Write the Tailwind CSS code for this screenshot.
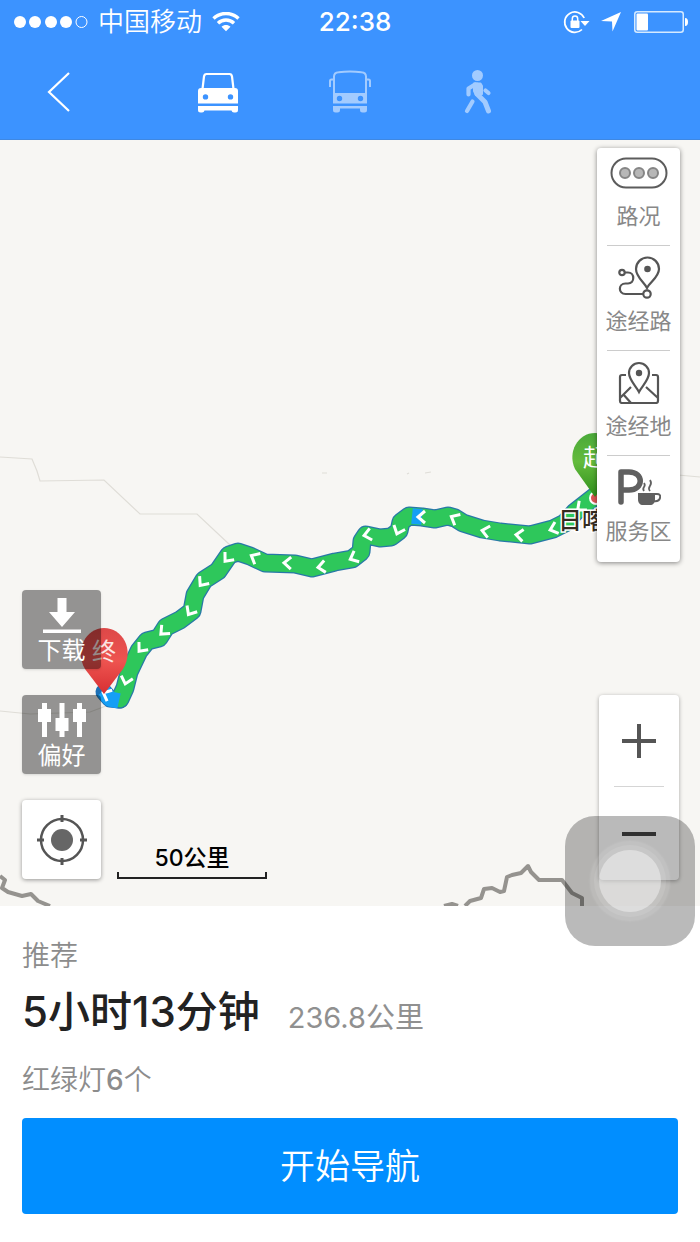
<!DOCTYPE html>
<html lang="zh-CN">
<head>
<meta charset="utf-8">
<meta name="viewport" content="width=device-width, initial-scale=1">
<title>路线规划</title>
<script src="https://cdn.jsdelivr.net/npm/@tailwindcss/browser@4"></script>
</head>
<body class="relative flex min-h-screen flex-col bg-white font-['Inter','Noto_Sans_CJK_SC',sans-serif]">

<header class="border-b border-[#3f88e2] bg-[#3c93ff] text-white">
  <!-- Status bar -->
  <div class="grid h-11 grid-cols-[1fr_auto_1fr] items-center pr-3 pl-[14px]">
    <div class="flex items-center">
      <svg class="h-4 w-[76px]" viewBox="0 0 76 16" fill="#fff" aria-label="信号"><circle cx="6" cy="8" r="6"/><circle cx="21" cy="8" r="6"/><circle cx="37" cy="8" r="6"/><circle cx="52" cy="8" r="6"/><circle cx="67.500" cy="8" r="5.500" fill="none" stroke="#fff"/></svg>
      <span class="ml-2 text-[26px] leading-9 font-[350]">中国移动</span>
      <svg class="ml-[10px] h-5 w-7" viewBox="0 0 28 20" fill="none" stroke="#fff" stroke-width="3.400" aria-label="Wi-Fi"><path d="M1.500 6.500C8.500-.2 19.500-.2 26.500 6.500"/><path d="M6 11.200c4.500-4.300 11.500-4.300 16 0"/><path d="M9.500 14.800c2.600-2.300 6.400-2.300 9 0L14 19.300z" fill="#fff" stroke="none"/></svg>
    </div>
    <time class="pl-2 text-[26px] leading-9 font-medium">22:38</time>
    <div class="flex items-center justify-end">
      <svg class="h-6 w-7" viewBox="0 0 28 24" aria-label="方向锁定"><path d="M21.200 8A10.200 10.200 0 1 0 19 19.500" fill="none" stroke="#fff" stroke-width="1.700"/><path d="M17.500 11h9l-4.500 5z" fill="#fff"/><rect x="7.500" y="10.500" width="9" height="7.500" rx="1" fill="#fff"/><path d="M9.300 11V8.800a2.700 2.700 0 0 1 5.400 0V11" fill="none" stroke="#fff" stroke-width="1.500"/></svg>
      <svg class="mr-px ml-[10px] h-5 w-5" viewBox="0 0 20 20" aria-label="定位"><path d="M20 0 11.500 19.500 11 9.500 0 9z" fill="#fff"/></svg>
      <svg class="ml-3 h-[22px] w-[54px]" viewBox="0 0 54 22" aria-label="电池"><rect x=".75" y=".75" width="48.500" height="20.500" rx="2.500" fill="none" stroke="#d5eaff" stroke-width="1.500"/><rect x="2.500" y="2.500" width="11.500" height="17" rx="1" fill="#fff"/><path d="M51 7c2.500 0 3 2 3 4s-.5 4-3 4z" fill="#fff"/></svg>
    </div>
  </div>
  <!-- Travel modes -->
  <nav class="flex h-[95px] items-center pl-[34px]" aria-label="出行方式">
    <button type="button" aria-label="返回" class="grid h-14 w-[50px] place-items-center">
      <svg class="h-10 w-6" viewBox="0 0 24 40" fill="none" stroke="#fff" stroke-width="2.200"><path d="M22 1 2 20 22 39"/></svg>
    </button>
    <div class="ml-[106px] flex items-center gap-[76px]">
      <button type="button" aria-label="驾车" class="grid h-14 w-14 place-items-center">
        <svg class="h-12 w-12" viewBox="0 0 48 48" fill="#fff"><path d="M8.500 21 10 8.500C10.300 6.500 11 6 12.500 6h23c1.500 0 2.200.5 2.500 2.500L39.500 21" fill="none" stroke="#fff" stroke-width="2.200"/><path fill-rule="evenodd" d="M7 20h34c2 0 3 1 3 3v12.500H4V23c0-2 1-3 3-3zm4.500 6.200a2.700 2.700 0 1 0 0 5.400 2.700 2.700 0 0 0 0-5.400zm25 0a2.700 2.700 0 1 0 0 5.400 2.700 2.700 0 0 0 0-5.400z"/><path d="M4 38h40v4a2.500 2.500 0 0 1-2.500 2.500h-1.500A2.500 2.500 0 0 1 37.500 42.500H10.500A2.500 2.500 0 0 1 8 44.500H6.500A2.500 2.500 0 0 1 4 42z"/></svg>
      </button>
      <button type="button" aria-label="公交" class="grid h-14 w-14 place-items-center">
        <svg class="h-12 w-12" viewBox="0 0 48 48" fill="#a2cbff"><path d="M8 27V8.500C8 6 9.500 4.500 12.500 4.200c7-1 16-1 23 0 3 .3 4.500 1.800 4.500 4.300V27M8 11.500H5.500c-1 0-1.500.5-1.500 1.500V19M40 11.500h2.500c1 0 1.500.5 1.500 1.500V19" fill="none" stroke="#a2cbff" stroke-width="2"/><path fill-rule="evenodd" d="M7 25h34v10.500H7zm6.500 2.800a2.700 2.700 0 1 0 0 5.400 2.700 2.700 0 0 0 0-5.400zm21 0a2.700 2.700 0 1 0 0 5.400 2.700 2.700 0 0 0 0-5.400z"/><path d="M7 38h34v4a2.500 2.500 0 0 1-2.500 2.500h-2A2.500 2.500 0 0 1 34 42v-1.500H14V42a2.500 2.500 0 0 1-2.500 2.500h-2A2.500 2.500 0 0 1 7 42z"/></svg>
      </button>
      <button type="button" aria-label="步行" class="-ml-1 grid h-14 w-14 place-items-center">
        <svg class="h-12 w-12" viewBox="0 0 48 48" fill="none" stroke="#a2cbff" stroke-width="4.200" stroke-linecap="round" stroke-linejoin="round"><circle cx="23.500" cy="7.500" r="5.500" fill="#a2cbff" stroke="none"/><path d="M21 16.500 14.500 20.500v6M31.500 22.500l3 2.500M18.500 33.500l-5.500 9.500"/><path d="M23 17v9l8 8 3.500 9" stroke-width="5"/><path d="M20 15.500h6.500L28 18v8l-6 1-2-4z" fill="#a2cbff" stroke-width="2"/></svg>
      </button>
    </div>
  </nav>
</header>

<main class="flex flex-1 flex-col">
  <section class="relative flex min-h-[766px] flex-1 justify-between overflow-hidden bg-[#f7f6f3]" aria-label="地图">
    <!-- Map canvas -->
    <svg class="absolute inset-0 h-full w-full" viewBox="0 140 700 766" preserveAspectRatio="xMidYMid slice" fill="none" aria-hidden="true">
      <defs>
        <linearGradient id="red" x1="0" y1="0" x2="0" y2="1"><stop offset="0" stop-color="#dd4848"/><stop offset=".5" stop-color="#ee5450"/><stop offset="1" stop-color="#d72f32"/></linearGradient>
        <linearGradient id="green" x1="0" y1="0" x2="0" y2="1"><stop offset="0" stop-color="#4aa93a"/><stop offset=".45" stop-color="#64bb3c"/><stop offset="1" stop-color="#2f8f1c"/></linearGradient>
        <path id="route" d="M598 494 575 512 565 523 553 529 530 535 500 532 482 529 463 523 455 518 448 516 435 519 422 517 409 516 401 522 399 531 391 537 380 538 366 535 362 541 361 552 352 559 335 562 312 568 295 564 265 563 250 556 238 552 229 555 218 571 204 580 195 595 192 611 180 620 166 627 159 638 147 641 139 651 129 672 125 688 120 699"/>
        <path id="arrow" d="M4-6-3 0 4 6"/>
      </defs>
      <g stroke="#dfddd7" stroke-width="1.200"><path d="M0 457 32 459 37 471 40 481 104 480 140 514 197 514 230 545"/><path d="M678 475 700 477M0 711 30 714 90 712 106 706M322 473h5M407 474l2-1M425 473l6-1"/></g>
      <g stroke="#95938f" stroke-width="4" stroke-linejoin="round"><path d="M0 876 5 880 2 888 8 892 22 896 31 894 38 901 50 906M444 906l8-2 6 2M465 906l5-5 11-3 3-9 8-1 8 4 4-1 3-14 5-2 9-2 7-7 3 6 8 8h23l10 13 10 5v8"/></g>
      <g stroke-linejoin="round">
        <path d="m104 692 6 7 10 1" stroke="#1c6fb5" stroke-width="17" stroke-linecap="round"/>
        <use href="#route" stroke="#2878a7" stroke-width="19" stroke-linecap="round"/>
        <use href="#route" stroke="#2ec75b" stroke-width="16.500" stroke-linecap="round"/>
        <path d="m103 691 7 8 9 2M412 516l10 1" stroke="#159ff5" stroke-width="15.500"/>
      </g>
      <g stroke="#fff" stroke-width="3">
        <use href="#arrow" transform="translate(580 508) rotate(-40)"/>
        <use href="#arrow" transform="translate(553 529) rotate(-18)"/>
        <use href="#arrow" transform="translate(519 535) rotate(6)"/>
        <use href="#arrow" transform="translate(485 531) rotate(12)"/>
        <use href="#arrow" transform="translate(454 518) rotate(28)"/>
        <use href="#arrow" transform="translate(421 517)"/>
        <use href="#arrow" transform="translate(398 531) rotate(-68)"/>
        <use href="#arrow" transform="translate(367 535) rotate(-12)"/>
        <use href="#arrow" transform="translate(353 558) rotate(-25)"/>
        <use href="#arrow" transform="translate(321 567) rotate(-8)"/>
        <use href="#arrow" transform="translate(287 563) rotate(2)"/>
        <use href="#arrow" transform="translate(254 557) rotate(28)"/>
        <use href="#arrow" transform="translate(227 559) rotate(-50)"/>
        <use href="#arrow" transform="translate(202 583) rotate(-53)"/>
        <use href="#arrow" transform="translate(190 612) rotate(-58)"/>
        <use href="#arrow" transform="translate(163 632) rotate(-44)"/>
        <use href="#arrow" transform="translate(141 649) rotate(-50)"/>
        <use href="#arrow" transform="translate(126 681) rotate(-75)"/>
        <use href="#arrow" transform="translate(106 694) rotate(25)"/>
      </g>
      <circle cx="596" cy="498" r="6" fill="#d55" stroke="#fff" stroke-width="2"/>
      <path d="M595 497 575 469C567 452 578 433 595 433s29 18 20 36z" fill="url(#green)"/>
      <path d="M104 694 85 669C74 650 86 628 104 628s31 21 19 41z" fill="url(#red)"/>
      <g font-size="24" fill="#fff"><text x="583" y="466">起</text><text x="92" y="660" fill="#fbe5e3">终</text></g>
      <text x="558" y="529" font-size="24" font-weight="500" fill="#352b20" stroke="#fff" stroke-width="3" paint-order="stroke">日喀</text>
    </svg>

    <!-- Left controls and scale -->
    <div class="relative flex items-end gap-4 self-end pb-[27px] pl-[22px]">
      <div class="flex flex-col gap-[26px] text-2xl leading-7 text-white">
        <button type="button" class="flex size-[79px] flex-col items-center justify-between rounded bg-black/40 pt-[7px] pb-1 shadow-sm">
          <svg class="h-9 w-[38px] shrink-0" viewBox="0 0 38 36" fill="#fff"><path d="M14.500 1h9v14H32L19 30 6 15h8.500zM0 32.500h38v3.500H0z"/></svg>
          <span>下载</span>
        </button>
        <button type="button" class="flex size-[79px] flex-col items-center justify-between rounded bg-black/40 pt-[7px] pb-1 shadow-sm">
          <svg class="h-9 w-[50px] shrink-0" viewBox="0 0 50 36" fill="#fff"><path d="M5 1h5v6h4v13h-4v15H5V20H1V7h4zM22.500 1h5v15h4v13h-4v6h-5v-6h-4V16h4zM40 1h5v6h4v13h-4v15h-5V20h-4V7h4z"/></svg>
          <span>偏好</span>
        </button>
        <button type="button" aria-label="我的位置" class="grid size-[79px] place-items-center rounded bg-white shadow-[0_1px_4px_#0006]">
          <svg class="size-[52px]" viewBox="0 0 52 52" fill="none" stroke="#555" stroke-width="2.500"><circle cx="26" cy="26" r="21"/><circle cx="26" cy="26" r="11" fill="#666" stroke="none"/><path d="M26 1v7M26 44v7M1 26h7M44 26h7" stroke-width="3"/></svg>
        </button>
      </div>
      <div class="w-[150px] text-center text-[23px] leading-7 font-medium text-black">
        <p>50公里</p>
        <div class="h-[7px] border-x-2 border-b-2 border-[#222]"></div>
      </div>
    </div>

    <!-- Right controls -->
    <div class="relative flex flex-col items-center justify-between pt-2 pr-5 pb-[26px]">
      <div class="w-[83px] rounded bg-white px-[10px] text-[22px] leading-7 whitespace-nowrap text-[#888] shadow-[0_1px_5px_#0007]">
        <button type="button" class="flex h-[98px] w-full flex-col items-center border-b border-[#ccc] pt-[9px]">
          <svg class="h-8 w-[58px] shrink-0" viewBox="0 0 58 32" fill="none" stroke="#5c5c5c" stroke-width="2"><rect x="1.500" y="1.500" width="55" height="29" rx="14.500"/><g fill="#b7b7b7" stroke="#858585"><circle cx="15" cy="16" r="5"/><circle cx="29" cy="16" r="5"/><circle cx="43" cy="16" r="5"/></g></svg>
          <span class="mt-[13px]">路况</span>
        </button>
        <button type="button" class="flex h-[105px] w-full flex-col items-center border-b border-[#ccc] pt-[9px]">
          <svg class="h-11 w-11 shrink-0" viewBox="0 0 44 44" fill="none" stroke="#555" stroke-width="2.200"><path d="M30 33c-3-6-11-11-11-19a11.500 11.500 0 0 1 23 0c0 8-9 13-12 19z"/><circle cx="30.500" cy="14" r="3.300" fill="#555" stroke="none"/><circle cx="5" cy="17.500" r="2.700"/><circle cx="30" cy="39" r="3.700"/><path d="M8 17.500h3c7 0 7 11 0 11H8.500C1 28.500 1 39 8.500 39h18"/></svg>
          <span class="mt-2">途经路</span>
        </button>
        <button type="button" class="flex h-[105px] w-full flex-col items-center border-b border-[#ccc] pt-[9px]">
          <svg class="h-11 w-11 shrink-0" viewBox="0 0 44 44" fill="none" stroke="#555" stroke-width="2.200"><path d="M22 32C19 26 12 20 12 13a10 10 0 0 1 20 0c0 7-7 13-10 19z"/><circle cx="22" cy="13" r="3.200" fill="#555" stroke="none"/><path d="M9 15H5q-2 0-2 2v24q0 2 2 2h34q2 0 2-2V17q0-2-2-2h-4M3 38l11-11M6 34l8 9M29 27l12 11"/></svg>
          <span class="mt-2">途经地</span>
        </button>
        <button type="button" class="flex h-[106px] w-full flex-col items-center pt-[9px]">
          <svg class="h-11 w-11 shrink-0" viewBox="0 0 44 44" fill="none" stroke="#606060"><path d="M4 37V7h8c15 0 15 18 0 18H5" stroke-width="5.500" stroke-linejoin="round" stroke-linecap="round"/><path d="M21 28h17v6c0 4-2 6-5 6h-7c-3 0-5-2-5-6z" fill="#606060" stroke="none"/><path d="M37 29h3q4 0 3 4t-7 3" stroke-width="2"/><path d="M27 26c-3-4 3-4 0-8M33 26c-4-5 4-5 0-11" stroke-width="1.800"/></svg>
          <span class="mt-2">服务区</span>
        </button>
      </div>
      <div class="flex w-20 flex-col items-center rounded-sm bg-white shadow-[0_1px_4px_#0005]">
        <button type="button" aria-label="放大" class="grid h-[91px] w-full place-items-center"><svg class="size-9" viewBox="0 0 36 36" stroke="#555" stroke-width="4"><path d="M1 18h34M18 1v34"/></svg></button>
        <div class="h-px w-[50px] bg-[#d5d5d5]"></div>
        <button type="button" aria-label="缩小" class="grid h-[93px] w-full place-items-center"><svg class="size-9" viewBox="0 0 36 36" stroke="#444" stroke-width="4"><path d="M1 18h34"/></svg></button>
      </div>
    </div>
  </section>

  <section class="px-[22px] pt-8 pb-7" aria-label="路线详情">
    <p class="text-[28px] leading-9 font-[350] text-[#8c8c8c]">推荐</p>
    <div class="mt-2 flex items-end gap-7">
      <h1 class="text-[42px] leading-[60px] font-medium text-[#222]">5小时13分钟</h1>
      <p class="pb-1 text-[29px] leading-10 text-[#909090]">236.8公里</p>
    </div>
    <p class="mt-5 text-[28px] leading-9 font-[350] text-[#8c8c8c]">红绿灯<span class="font-medium">6</span>个</p>
    <button type="button" class="mt-5 h-24 w-full rounded bg-[#018eff] text-[35px] font-[350] text-white">开始导航</button>
  </section>
</main>

<!-- Floating assistive button -->
<button type="button" aria-label="辅助触控" class="absolute right-[5px] bottom-[296px] grid size-[130px] place-items-center rounded-[30px] bg-black/27">
  <span class="grid size-20 place-items-center rounded-full bg-white/10 shadow-[0_0_3px_#ffffff22]"><span class="grid size-[72px] place-items-center rounded-full bg-white/10"><span class="size-[62px] rounded-full bg-white/40"></span></span></span>
</button>
</body>
</html>
